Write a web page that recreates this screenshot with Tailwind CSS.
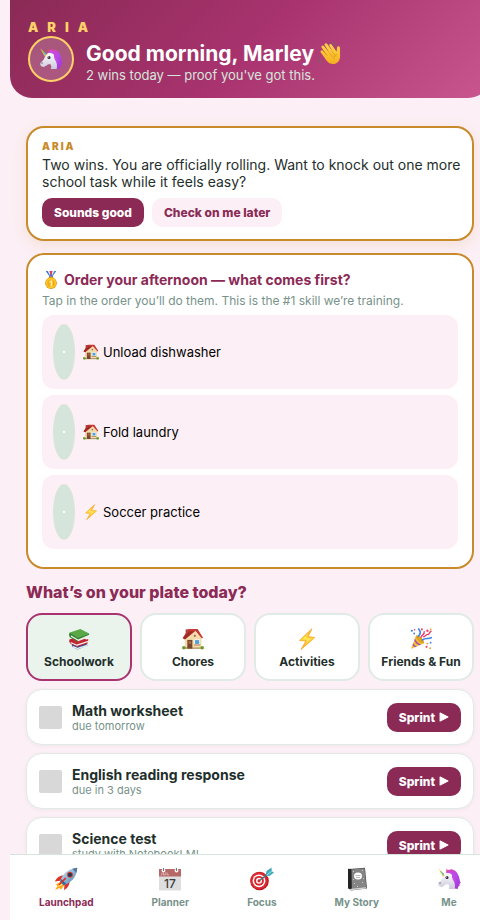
<!DOCTYPE html>
<html lang="en">
<head>
<meta charset="utf-8">
<meta name="viewport" content="width=device-width, initial-scale=1">
<title>Aria – Launchpad</title>
<script src="https://cdn.jsdelivr.net/npm/@tailwindcss/browser@4"></script>
</head>
<body class="h-screen overflow-hidden bg-[#fcf0f6] pl-[10px] font-['Inter','Liberation_Sans',sans-serif] text-[#1f2f2b]">

<!-- Shared pictograms -->
<svg class="absolute size-0" aria-hidden="true">
  <defs>
    <linearGradient id="mane" x1="0" y1="0" x2="1" y2="1"><stop offset="0" stop-color="#e83ed0"/><stop offset=".5" stop-color="#b44be8"/><stop offset="1" stop-color="#a52fd0"/></linearGradient>
    <linearGradient id="head" x1="0" y1="0" x2="0" y2="1"><stop offset="0" stop-color="#fff"/><stop offset="1" stop-color="#cbc9dc"/></linearGradient>
    <linearGradient id="skin" x1="0" y1="0" x2="0" y2="1"><stop offset="0" stop-color="#ffd94a"/><stop offset="1" stop-color="#f5ae1e"/></linearGradient>
    <linearGradient id="bolt" x1="0" y1="0" x2="0" y2="1"><stop offset="0" stop-color="#ff9f1c"/><stop offset=".5" stop-color="#ffd83d"/><stop offset="1" stop-color="#fba51a"/></linearGradient>
    <linearGradient id="hull" x1="0" y1="0" x2="1" y2="1"><stop offset="0" stop-color="#cfe4f3"/><stop offset=".5" stop-color="#8fb8d8"/><stop offset="1" stop-color="#47708f"/></linearGradient>
  </defs>
  <symbol id="unicorn" viewBox="0 0 24 24">
    <path d="M10 3.500c4-2 8.500-.6 10.500 3 2.200 3 1.900 7 3.200 9.500-1.200.6-1.500 1.400-1 2.500-1.300.3-1.700 1.700-2 3.500l-6-1L11 9z" fill="url(#mane)"/>
    <path d="M8.500 6.500C11 4.500 14 5 15.500 8c1.300 3 .8 5 2 8 .7 2 .5 4 .1 6h-5.800c.8-2 .6-3.500-.4-4.700-2-.4-3.100.3-4.300 1.500-1.600 1.600-4.400 1.500-5.600-.5-.8-1.600.2-2.900 1.700-4C5.700 12 6 8.500 8.500 6.500z" fill="url(#head)"/>
    <path d="M8 8L1.200 1.300 6 9.700z" fill="#ffd34e"/><path d="M3.300 3.400l1.600 1.500-.6 1.700z" fill="#40c057"/><path d="M5 5l2 2-1.200 2z" fill="#37aee5"/>
    <path d="M9.200 5.500L9.500 1.500l2.600 3.600zM13 5l2-3.500.8 4.800z" fill="#e4487e"/>
    <path d="M8.400 5.800c2-2 5.500-2.600 7.300-.1 2.800 3.900 1.600 7 3.300 10.100-3.200-1.500-4.200-5.300-4.100-8-2.200-2-4.200-1.800-6.500-2z" fill="#c44be4"/>
    <circle cx="10" cy="10.500" r="1.500" fill="#302838"/><circle cx="9.600" cy="10" r=".5" fill="#fff"/><ellipse cx="3" cy="16" rx="1.100" ry=".8" fill="#8d829f"/>
  </symbol>
  <symbol id="wave" viewBox="0 0 24 24">
    <path d="M2.700 10.300C1.900 9 3.700 7.600 4.800 8.800l4.100 4.400-5.200-7.400c-1-1.600 1-3.100 2.200-1.700l5.700 7-4.800-7.800c-1-1.700 1.200-3 2.400-1.400l5.500 7.800-3.300-5.900c-.8-1.500 1.200-2.600 2.200-1.200l5 7.200.4-4c.2-2.300 2.900-2.100 3 .2l.1 7.700c.1 5.500-3.200 8.300-7 8.300-4.200 0-6.300-2.800-8-5.400z" fill="url(#skin)"/>
    <path d="M8.900 13.200L5 8.500m6.600 2.600l3 4m-.5-5.500l3 4.200m1.500-1.300c-2 .6-3 2-2.600 4" fill="none" stroke="#dd8e14" stroke-width=".7" stroke-linecap="round"/>
    <path d="M13.500 1.500c2 0 3.500 1 4.500 3M15 .5c2 .2 3.500 1.200 4.400 3M.6 15.200c.2 2.200 1.300 3.700 3.200 4.600M.2 18c.4 1.800 1.300 3 2.600 3.700" fill="none" stroke="#8b5767" stroke-width="1" stroke-linecap="round"/>
  </symbol>
  <symbol id="medal" viewBox="0 0 24 24">
    <path d="M5 0h4.500l5.500 8-3 2z" fill="#2e6fd0"/><path d="M19 0h-4.500L9 8l3 2z" fill="#3a7bdc"/><path d="M7.500 0h4l2.500 6-2 3zM16.500 0h-4L10 6l2 3z" fill="#e8eaf5"/><path d="M10 0h4l-2 8z" fill="#d6405a"/>
    <rect x="9" y="7.500" width="6" height="3" rx="1" fill="#c88912"/>
    <circle cx="12" cy="16.200" r="7.800" fill="#dd9515"/><circle cx="12" cy="16" r="6.900" fill="#ffc928"/><circle cx="12" cy="16.200" r="5" fill="#f3ad18"/>
    <path d="M9.800 14l2.700-1.800h1.200v8.300h-2.200v-5.800l-1.700.8z" fill="#fff09a"/>
  </symbol>
  <symbol id="house" viewBox="0 0 24 24">
    <path d="M4 1.500h3.500V8H4z" fill="#a34235"/><path d="M3 10l9-8 9 8v12.500H3z" fill="#f4dcaa"/><path d="M3 21h18v1.800H3z" fill="#b89a72"/>
    <path d="M7 1h10l6 9.500-1.300.9-7-8L3 12.500.8 11z" fill="#c53a31"/><path d="M14.500 4.500l6.500 7V21H9V11z" fill="#f4dcaa"/><path d="M8 3.500h5L3.400 12.300.8 11z" fill="#9c2b2b"/>
    <path d="M5.800 13h5.500v9.500H5.800z" fill="#79452e"/><path d="M7 14.300h3v3H7z" fill="#a46a48"/>
    <path d="M13.500 12.500h6v5.500h-6z" fill="#fff"/><path d="M14.200 13.200h4.600v4.200h-4.600z" fill="#52a2d8"/><path d="M13 18h7v1h-7z" fill="#a86f40"/>
    <circle cx="2" cy="21.500" r="2" fill="#6b9b2f"/><circle cx="22" cy="21.500" r="2" fill="#6b9b2f"/><circle cx="14" cy="8.500" r="1.200" fill="#9f6b43"/>
  </symbol>
  <symbol id="zap" viewBox="0 0 24 24">
    <path d="M17.500.8L3.800 13.500l7 .7-5.300 9.300L20.500 10.300l-7.300-.9z" fill="url(#bolt)" stroke="#f5a21b" stroke-width=".8" stroke-linejoin="round"/>
    <path d="M14 5.500l-6.500 6.600 5.500.6-2.800 5 6-6.300-5.500-.8z" fill="#ffe85c"/>
  </symbol>
  <symbol id="books" viewBox="0 0 24 24">
    <path d="M4 17.500l13-2.500 5 4-12 4.500-5.500-3z" fill="#28559c"/><path d="M5 19.300l5.500 2.300L21.500 18v2L10 23.300 5 21z" fill="#e7ecf3"/>
    <path d="M2.500 12l13-2.500 6 4.500-12 4.300-6.500-3.500z" fill="#c52835"/><path d="M3.500 14l6.200 2.600L21.500 13v3L9.700 20 3 16.500z" fill="#f2e9e6"/><path d="M2.200 12l7.300 4.300L22 12v1.800L9.500 18 3 15.200v1.300l6.700 3 11.800-4v1.500L9.700 20.800 2.500 17C1 15 1 13 2.200 12z" fill="#c0212f"/>
    <path d="M2 4.800L13.500 1l9.500 5-12 5.500z" fill="#59a845"/><path d="M3 7l8 4.500L22.500 7v3L11 14.500 3.200 9.500z" fill="#edf0e8"/><path d="M2 4.800l9 6.200L23 6v1.300L11 12.600 3.200 7.900v1.700l7.800 4.600v1.200L2 10C.8 8 1 6 2 4.800z" fill="#31802f"/>
  </symbol>
  <symbol id="party" viewBox="0 0 24 24">
    <path d="M1 23L6.500 8.500c3 .5 7 4.500 8.500 8z" fill="#f4bd2d"/><path d="M6.500 8.500C8 5.500 17 13 15 16.500c-2 2-9.500-5-8.500-8z" fill="#e0a321"/>
    <path d="M5.400 11.500c1.500 3.500 4 6 7 6.500l-2.200.8c-2.500-.7-4.500-3-5.600-5.300zM3.500 16.500c1 2 2.600 3.500 4.500 3.500l-2.200 1c-1.300-.3-2.300-1.300-3-2.500z" fill="#a451be"/>
    <path d="M9 9c3-2.500 2.500-5.500.5-8M13.500 13c3.500-3 6.500-.5 10-2.500" fill="none" stroke="#3c86e5" stroke-width="1.700" stroke-linecap="round"/>
    <path d="M12 10c1-3 4-2.500 3.500-6M15 9.500c2-.3 2.500-3 5-2.500 1.500-.6 1-3 3-3.500" fill="none" stroke="#e8446f" stroke-width="1.600" stroke-linecap="round"/>
    <g fill="#3e7de0"><circle cx="2" cy="3" r="1.200"/><circle cx="4.500" cy="6" r="1"/><circle cx="22.500" cy="16" r="1"/></g><g fill="#ec4871"><circle cx="13" cy="1.500" r="1.100"/><circle cx="19" cy="3" r="1.300"/><circle cx="18" cy="20.500" r="1.200"/><circle cx="5" cy="2" r=".9"/></g><g fill="#e9a02a"><circle cx="22.500" cy="1.500" r="1"/><circle cx="19" cy="17" r="1"/><circle cx="22" cy="22" r="1"/></g>
  </symbol>
  <symbol id="rocket" viewBox="0 0 24 24">
    <path d="M7.500 14L2 17.500 3.500 19 1 23l4.500-2L7 22.500l4-5z" fill="#ffa51f"/><path d="M7.500 15.500l-4 4.500 5-2z" fill="#fff16b"/>
    <path d="M10 8.500C5.500 8.300 3 10.500.8 14.500l5.500-.8zM15.500 14c.2 4.500-2 7-5.500 9.200l.5-5.700z" fill="#da3328"/>
    <path d="M6 14.500C8 8 13 2 23.300.8 22.500 11 16.500 16 9.800 18.200z" fill="url(#hull)"/><path d="M18.200 1.800L23.300.8l-.9 5.200C21 4.700 19.500 3 18.200 1.800z" fill="#54759a"/>
    <path d="M7.500 12l4.800 5-2.500 1.200L6 14.500z" fill="#35699d"/><circle cx="16" cy="7.800" r="3" fill="#d6403a"/><circle cx="16" cy="7.800" r="2.100" fill="#22394f"/>
    <path d="M12.500 11.500l-7 7-1-1 6.500-7z" fill="#d83228"/>
  </symbol>
  <symbol id="target" viewBox="0 0 24 24">
    <circle cx="9.500" cy="14" r="9.300" fill="#b91822"/><circle cx="9" cy="13.800" r="8.500" fill="#de2a32"/><circle cx="9" cy="13.800" r="6.400" fill="#fff"/><circle cx="9" cy="13.800" r="4.900" fill="#d9252d"/><circle cx="9" cy="13.800" r="3" fill="#fff"/><circle cx="9" cy="13.800" r="1.600" fill="#d9252d"/>
    <path d="M9.500 13.500l9-7" stroke="#4b6f83" stroke-width="1.400"/><path d="M15.500 8.500l1-4.500 5-3.500.3 3.700 2.200 1.300-4.500 3.600z" fill="#42a9b9"/><path d="M17 7.800l4.800-3.600" stroke="#9ce5e8" stroke-width="1"/>
  </symbol>
  <symbol id="notebook" viewBox="0 0 24 24">
    <path d="M3.500 2L20 .8l2 20.800L6 23.500 3 21z" fill="#535353"/><path d="M6 2.500l13.500-1 1.800 19.400L6.200 22.500z" fill="#858585"/><path d="M3 1.800l3.500.4L6.800 23 3 21.200z" fill="#242424"/>
    <path d="M4.500 22l16.300-1.700.2 1.300L6 23.300z" fill="#d9d9d9"/><path d="M8 4l1 1m8-2l1 1M9 16l1 1m7-2l1 1m-6 3l1 1m5-9l1 1M8 12l1 1" stroke="#c9c9c9" stroke-width="1"/>
    <ellipse cx="13" cy="9" rx="4" ry="3.500" fill="#fff"/><path d="M10.500 8.500h5m-4.500 2h4" stroke="#999" stroke-width=".7"/>
  </symbol>
</svg>

<div class="h-full w-screen overflow-y-auto pb-[66px] [scrollbar-width:none]">
  <header class="rounded-b-[22px] bg-linear-135 from-[#8b2a55] via-[#a8336f] to-[#c9568f] px-[18px] pt-[18px] pb-[14px] text-white">
    <p class="text-[13px] leading-[18px] font-black tracking-[9px] text-[#ffd166]">ARIA</p>
    <div class="flex items-start gap-3">
      <div class="flex size-[46px] shrink-0 items-center justify-center rounded-full border-2 border-[#ffd166] bg-white/20">
        <svg class="size-6" role="img" aria-label="Unicorn"><use href="#unicorn"/></svg>
      </div>
      <div class="pt-[5px]">
        <h1 class="flex items-center gap-1 text-[21px] leading-[26px] font-bold">Good morning, Marley <svg class="size-6" role="img" aria-label="Waving hand"><use href="#wave"/></svg></h1>
        <p class="text-[13px] leading-[17px] text-[#d6e5dc]">2 wins today — proof you've got this.</p>
      </div>
    </div>
  </header>

  <main class="px-4 pt-7">
    <section class="rounded-[18px] border-2 border-[#c98a2b] bg-white px-[14px] py-3 shadow-[0_4px_16px_rgba(201,138,43,0.16)]">
      <h2 class="text-[10px] leading-[13px] font-black tracking-[2px] text-[#c98a2b]">ARIA</h2>
      <p class="-mr-2 mt-[3px] text-[14px] leading-[17px]">Two wins. You are officially rolling. Want to knock out one more school task while it feels easy?</p>
      <div class="mt-2 flex gap-2">
        <button type="button" class="rounded-[10px] bg-[#8b2a55] px-3 py-[7px] text-[12px] leading-[15px] font-extrabold text-white">Sounds good</button>
        <button type="button" class="rounded-[10px] bg-[#fcf0f6] px-3 py-[7px] text-[12px] leading-[15px] font-extrabold text-[#8b2a55]">Check on me later</button>
      </div>
    </section>

    <section class="mt-3 rounded-[18px] border-2 border-[#c98a2b] bg-white px-[14px] pt-4 pb-[18px]">
      <h2 class="flex items-center gap-1 text-[14px] leading-[18px] font-bold text-[#8b2a55]"><svg class="size-[18px]" role="img" aria-label="Gold medal"><use href="#medal"/></svg>Order your afternoon — what comes first?</h2>
      <p class="mt-1 mb-[6px] text-[12px] leading-4 text-[#77928a]">Tap in the order you’ll do them. This is the #1 skill we’re training.</p>
      <div class="flex flex-col gap-[6px]">
        <button type="button" class="flex items-center rounded-xl bg-[#fcf0f6] px-[11px] py-[9px] text-[13px] text-black">
          <span class="mr-2 flex h-14 w-[22px] items-center justify-center rounded-[50%] bg-[#d6e5dc] font-bold text-white">·</span>
          <svg class="mr-1 size-4" aria-hidden="true"><use href="#house"/></svg><span class="pt-[2px]">Unload dishwasher</span>
        </button>
        <button type="button" class="flex items-center rounded-xl bg-[#fcf0f6] px-[11px] py-[9px] text-[13px] text-black">
          <span class="mr-2 flex h-14 w-[22px] items-center justify-center rounded-[50%] bg-[#d6e5dc] font-bold text-white">·</span>
          <svg class="mr-1 size-4" aria-hidden="true"><use href="#house"/></svg><span class="pt-[2px]">Fold laundry</span>
        </button>
        <button type="button" class="flex items-center rounded-xl bg-[#fcf0f6] px-[11px] py-[9px] text-[13px] text-black">
          <span class="mr-2 flex h-14 w-[22px] items-center justify-center rounded-[50%] bg-[#d6e5dc] font-bold text-white">·</span>
          <svg class="mr-1 size-4" aria-hidden="true"><use href="#zap"/></svg><span class="pt-[2px]">Soccer practice</span>
        </button>
      </div>
    </section>

    <h2 class="mt-[13px] text-[16px] leading-5 font-extrabold text-[#8b2a55]">What’s on your plate today?</h2>
    <div class="mt-[11px] grid grid-cols-4 gap-2">
      <button type="button" aria-pressed="true" class="flex h-[68px] flex-col items-center justify-center gap-1 rounded-2xl border-2 border-[#a8336f] bg-[#eaf4ed] pt-[2px] text-[12px] leading-[15px] font-bold"><svg class="size-[22px]" aria-hidden="true"><use href="#books"/></svg>Schoolwork</button>
      <button type="button" class="flex h-[68px] flex-col items-center justify-center gap-1 rounded-2xl border-2 border-[#e0ebe6] bg-white pt-[2px] text-[12px] leading-[15px] font-bold"><svg class="size-[22px]" aria-hidden="true"><use href="#house"/></svg>Chores</button>
      <button type="button" class="flex h-[68px] flex-col items-center justify-center gap-1 rounded-2xl border-2 border-[#e0ebe6] bg-white pt-[2px] text-[12px] leading-[15px] font-bold"><svg class="size-[22px]" aria-hidden="true"><use href="#zap"/></svg>Activities</button>
      <button type="button" class="flex h-[68px] flex-col items-center justify-center gap-1 rounded-2xl border-2 border-[#e0ebe6] bg-white pt-[2px] text-[12px] leading-[15px] font-bold whitespace-nowrap"><svg class="size-[22px]" aria-hidden="true"><use href="#party"/></svg>Friends &amp; Fun</button>
    </div>

    <ul class="mt-2 flex flex-col gap-2">
      <li class="flex h-14 items-center rounded-2xl border border-[#e0ebe6] bg-white px-3 shadow-[0_1px_4px_rgba(31,47,43,0.06)]">
        <input id="math" type="checkbox" class="size-[23px] shrink-0 appearance-none rounded-[2px] bg-[#d8d8d8]">
        <label for="math" class="ml-[10px] grow"><span class="block text-[14px] leading-[17px] font-bold">Math worksheet</span><span class="block text-[11px] leading-[14px] text-[#77928a]">due tomorrow</span></label>
        <button type="button" class="flex items-center gap-1 rounded-[10px] bg-[#8b2a55] px-3 py-[7px] text-[12px] leading-[15px] font-extrabold text-white">Sprint <svg class="size-[10px]" viewBox="0 0 9 9" aria-hidden="true"><path d="M1 1l7 3.500L1 8z" fill="currentColor" stroke="currentColor" stroke-linejoin="round"/></svg></button>
      </li>
      <li class="flex h-14 items-center rounded-2xl border border-[#e0ebe6] bg-white px-3 shadow-[0_1px_4px_rgba(31,47,43,0.06)]">
        <input id="english" type="checkbox" class="size-[23px] shrink-0 appearance-none rounded-[2px] bg-[#d8d8d8]">
        <label for="english" class="ml-[10px] grow"><span class="block text-[14px] leading-[17px] font-bold">English reading response</span><span class="block text-[11px] leading-[14px] text-[#77928a]">due in 3 days</span></label>
        <button type="button" class="flex items-center gap-1 rounded-[10px] bg-[#8b2a55] px-3 py-[7px] text-[12px] leading-[15px] font-extrabold text-white">Sprint <svg class="size-[10px]" viewBox="0 0 9 9" aria-hidden="true"><path d="M1 1l7 3.500L1 8z" fill="currentColor" stroke="currentColor" stroke-linejoin="round"/></svg></button>
      </li>
      <li class="flex h-14 items-center rounded-2xl border border-[#e0ebe6] bg-white px-3 shadow-[0_1px_4px_rgba(31,47,43,0.06)]">
        <input id="science" type="checkbox" class="size-[23px] shrink-0 appearance-none rounded-[2px] bg-[#d8d8d8]">
        <label for="science" class="ml-[10px] grow"><span class="block text-[14px] leading-[17px] font-bold">Science test</span><span class="block text-[11px] leading-[14px] text-[#77928a]">study with NotebookLM!</span></label>
        <button type="button" class="flex items-center gap-1 rounded-[10px] bg-[#8b2a55] px-3 py-[7px] text-[12px] leading-[15px] font-extrabold text-white">Sprint <svg class="size-[10px]" viewBox="0 0 9 9" aria-hidden="true"><path d="M1 1l7 3.500L1 8z" fill="currentColor" stroke="currentColor" stroke-linejoin="round"/></svg></button>
      </li>
    </ul>
  </main>
</div>

<nav class="fixed bottom-0 left-[10px] flex h-[66px] w-full justify-around border-t border-[#d6e5dc] bg-white pt-3 text-[10px] leading-[14px] font-bold text-[#77928a]">
  <a href="#launchpad" aria-current="page" class="flex flex-col items-center gap-1 text-[#8b2a55]"><svg class="size-6" aria-hidden="true"><use href="#rocket"/></svg>Launchpad</a>
  <a href="#planner" class="flex flex-col items-center gap-1"><svg class="size-6" viewBox="0 0 24 24" aria-hidden="true">
    <path d="M1 2h22v21.500H1z" fill="#dedede"/><path d="M1 2h22v7.500H1z" fill="#b66868"/>
    <circle cx="5.500" cy="3.500" r="1.900" fill="#f7f2f2"/><circle cx="18.500" cy="3.500" r="1.900" fill="#f7f2f2"/><path d="M5.500 1v3m13-3v3" stroke="#777" stroke-width="1"/>
    <path d="M4 5.500v2.400H2.800M5.500 5.500v2.400h1.800V5.500M9 5.300v2.600h2" fill="none" stroke="#edcccc" stroke-width=".7"/>
    <text x="12" y="21" text-anchor="middle" font-family="Inter, sans-serif" font-size="12" font-weight="500" fill="#3b3b3b">17</text>
  </svg>Planner</a>
  <a href="#focus" class="flex flex-col items-center gap-1"><svg class="size-6" aria-hidden="true"><use href="#target"/></svg>Focus</a>
  <a href="#story" class="flex flex-col items-center gap-1"><svg class="size-6" aria-hidden="true"><use href="#notebook"/></svg>My Story</a>
  <a href="#me" class="flex flex-col items-center gap-1"><svg class="size-6" aria-hidden="true"><use href="#unicorn"/></svg>Me</a>
</nav>
</body>
</html>
